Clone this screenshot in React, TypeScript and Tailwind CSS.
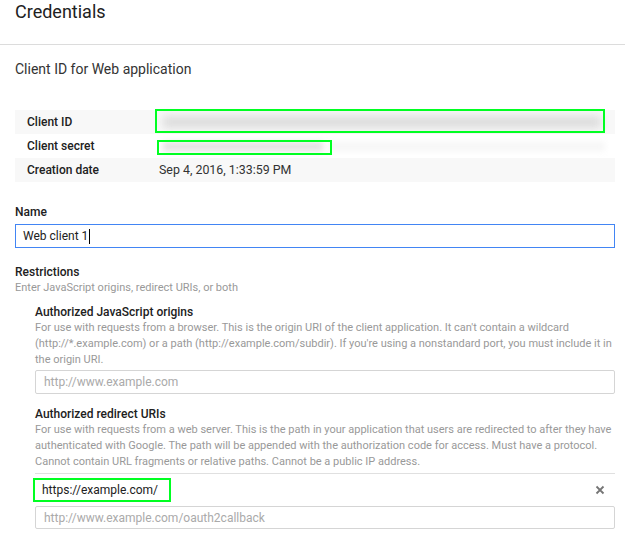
import React from "react";

const font = { fontFamily: "Roboto, 'Liberation Sans', sans-serif" };

export default function App() {
  return (
    <div className="w-[625px] h-[539px] bg-white overflow-hidden text-[#212121]" style={font}>
      <div className="h-[45px] px-[15px] border-b border-[#dcdcdc]">
        <div className="text-[18px] leading-[24px] text-[#212121]">Credentials</div>
      </div>
      <div className="px-[15px] pt-[14px]">
        <div className="text-[14px] leading-[20px] text-[#333]">Client ID for Web application</div>

        <div className="mt-[31px] w-[600px] text-[12px]">
          <div className="relative h-[24px] flex items-center bg-[#f8f8f8]">
            <div className="w-[144px] pl-[12px] font-medium">Client ID</div>
            <div className="flex-1 h-full relative">
              <div className="absolute left-[4px] right-[14px] top-[6px] h-[12px] bg-[#dcdcdc] blur-[4px]"></div>
            </div>
            <div className="absolute left-[140px] top-[-1px] w-[450px] h-[24px] border-2 border-[#00ff22]"></div>
          </div>
          <div className="relative h-[24px] flex items-center bg-white">
            <div className="w-[144px] pl-[12px] font-medium">Client secret</div>
            <div className="flex-1 h-full relative">
              <div className="absolute left-[4px] w-[160px] top-[8px] h-[9px] bg-[#e0e0e0] blur-[3px]"></div>
              <div className="absolute left-[170px] right-[10px] top-[8px] h-[9px] bg-[#f6f6f6] blur-[3px]"></div>
            </div>
            <div className="absolute left-[142px] top-[6px] w-[175px] h-[15px] border-2 border-[#00ff22]"></div>
          </div>
          <div className="h-[24px] flex items-center bg-[#f8f8f8]">
            <div className="w-[144px] pl-[12px] font-medium">Creation date</div>
            <div className="flex-1 text-[12.4px] text-[#333]">Sep 4, 2016, 1:33:59 PM</div>
          </div>
        </div>

        <div className="mt-[22px] text-[12px] leading-[16px] font-medium">Name</div>
        <div className="mt-[4px] w-[600px] h-[24px] border border-[#4285f4] flex items-center px-[7px]">
          <span className="text-[12px] text-[#212121]">Web client 1</span>
          <span className="ml-[1px] w-[1px] h-[15px] bg-black"></span>
        </div>

        <div className="mt-[16px] text-[12px] leading-[16px] font-medium">Restrictions</div>
        <div className="text-[11px] leading-[16px] text-[#999]">Enter JavaScript origins, redirect URIs, or both</div>

        <div className="ml-[20px] w-[580px] mt-[8px]">
          <div className="text-[12px] leading-[16px] font-medium">Authorized JavaScript origins</div>
          <div className="text-[11px] leading-[16px] text-[#999]">
            For use with requests from a browser. This is the origin URI of the client application. It can't contain a wildcard (http://*.example.com) or a path (http://example.com/subdir). If you're using a nonstandard port, you must include it in the origin URI.
          </div>
          <div className="mt-[2px] h-[24px] border border-[#d5d5d5] rounded-[2px] flex items-center px-[8px] text-[12px] text-[#aaa]">
            http://www.example.com
          </div>

          <div className="mt-[12px] text-[12px] leading-[16px] font-medium">Authorized redirect URIs</div>
          <div className="text-[11px] leading-[16px] text-[#999]">
            For use with requests from a web server. This is the path in your application that users are redirected to after they have authenticated with Google. The path will be appended with the authorization code for access. Must have a protocol. Cannot contain URL fragments or relative paths. Cannot be a public IP address.
          </div>
          <div className="mt-[3px] border-t border-[#e0e0e0] h-[33px] flex items-center justify-between">
            <div className="ml-[-2px] h-[24px] w-[138px] border-2 border-[#00ff22] flex items-center pl-[7px] text-[12px] text-[#212121]">
              https://example.com/
            </div>
            <svg width="10" height="10" viewBox="0 0 10 10" className="mr-[10px]">
              <path d="M1.5 1.5 L8.5 8.5 M8.5 1.5 L1.5 8.5" stroke="#757575" strokeWidth="1.8" />
            </svg>
          </div>
          <div className="h-[23px] border border-[#d5d5d5] rounded-[2px] flex items-center px-[8px] text-[12px] text-[#aaa]">
            http://www.example.com/oauth2callback
          </div>
        </div>
      </div>
    </div>
  );
}
